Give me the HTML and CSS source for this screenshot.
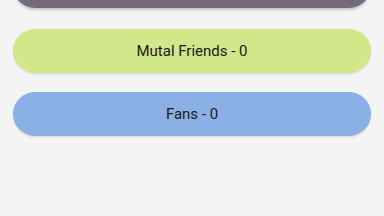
FILE: index.html
```html
<!DOCTYPE html>
<html lang="en">

<head>
    <meta charset="UTF-8">
    <meta name="viewport" content="width=device-width, initial-scale=1.0">
    <title>Friends</title>
    <link rel="stylesheet" href="styles.css">
</head>

<body>
    <div class="list">
        <div class="item item-dark"></div>
        <div class="item item-green">Mutal Friends - 0</div>
        <div class="item item-blue">Fans - 0</div>
    </div>
</body>

</html>
```

FILE: styles.css
```css
* {
    margin: 0;
    padding: 0;
    box-sizing: border-box;
}

body {
    width: 384px;
    height: 216px;
    overflow: hidden;
    background-color: #f4f4f5;
    font-family: Roboto, "Noto Sans", sans-serif;
}

.list {
    display: flex;
    flex-direction: column;
    gap: 19px;
    padding: 0 13px;
    margin-top: -36px;
}

.item {
    height: 44px;
    line-height: 44px;
    border-radius: 22px;
    text-align: center;
    font-size: 15px;
    color: #1a1a1a;
    box-shadow: 0 1px 2px rgba(0, 0, 0, .12);
}

.item-dark {
    margin-bottom: 2px;
    background-color: #756a78;
    box-shadow: 0 2px 3px rgba(0, 0, 0, .2);
}

.item-green {
    background-color: #d2e68a;
}

.item-blue {
    background-color: #8bb0e6;
}
```
